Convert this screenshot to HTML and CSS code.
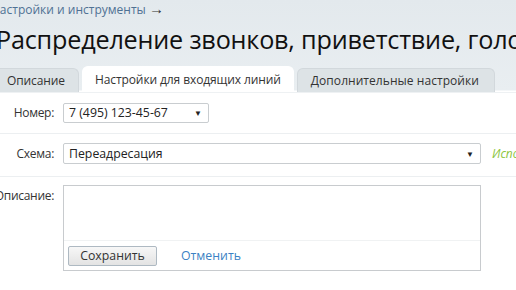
FILE: index.html
```html
<!DOCTYPE html>
<html lang="ru">
<head>
<meta charset="utf-8">
<link rel="stylesheet" href="styles.css">
</head>
<body>
<div class="page">
  <div class="crumbs"><a class="crumb-link">Настройки и инструменты</a> <span class="arrow">→</span></div>
  <h1 class="title">Распределение звонков, приветствие, голосовое меню</h1>
  <div class="tabs">
    <div class="tab">Описание</div>
    <div class="tab active">Настройки для входящих линий</div>
    <div class="tab extra">Дополнительные настройки</div>
  </div>
  <div class="panel">
    <div class="row">
      <div class="label">Номер:</div>
      <div class="field">
        <div class="select short"><span>7 (495) 123-45-67</span><span class="caret">▼</span></div>
      </div>
    </div>
    <div class="row">
      <div class="label">Схема:</div>
      <div class="field">
        <div class="select wide"><span>Переадресация</span><span class="caret">▼</span></div>
        <span class="hint">Использовать</span>
      </div>
    </div>
    <div class="row last">
      <div class="label">Описание:</div>
      <div class="field">
        <div class="editor">
          <div class="editor-area"></div>
          <div class="editor-foot">
            <button class="btn">Сохранить</button>
            <a class="cancel">Отменить</a>
          </div>
        </div>
      </div>
    </div>
  </div>
</div>
</body>
</html>
```

FILE: styles.css
```css
html, body {
  margin: 0;
  padding: 0;
  overflow: hidden;
}
body {
  width: 516px;
  height: 290px;
  background: linear-gradient(180deg, #e3e9ed 0%, #e9eef1 90px, #ffffff 91px);
  font-family: "Open Sans", "Noto Sans", sans-serif;
  color: #333;
}
.page {
  margin-left: -14px;
  width: 620px;
}
.crumbs {
  padding: 1px 0 0 5px;
  font-size: 12px;
  line-height: 17px;
  color: #4f7194;
}
.arrow {
  color: #333;
  font-size: 15px;
  line-height: 12px;
}
.title {
  margin: 0;
  padding: 4px 0 0 10px;
  font-weight: normal;
  font-size: 25.2px;
  line-height: 34px;
  letter-spacing: -0.2px;
  color: #111;
  white-space: nowrap;
}
.tabs {
  display: flex;
  align-items: flex-end;
  gap: 3px;
  margin-top: 11px;
  padding-left: 7px;
  height: 25px;
}
.tab {
  height: 23px;
  line-height: 23px;
  padding: 0 13px;
  font-size: 12px;
  letter-spacing: -0.1px;
  color: #333;
  background: #dde3e6;
  border: 1px solid #d2d8dc;
  border-bottom: none;
  border-radius: 6px 6px 0 0;
  white-space: nowrap;
}
.tab.extra {
  letter-spacing: 0.05px;
  padding: 0 15px 0 13px;
}
.tab.active {
  height: 25px;
  line-height: 25px;
  padding: 0 12px;
  background: #fff;
  border-color: #fff;
}
.panel {
  background: #fff;
  border-top: 1px solid #eef1f3;
}
.row {
  display: grid;
  grid-template-columns: 68px 1fr;
  column-gap: 9px;
  padding: 9px 0 10px;
  border-bottom: 1px solid #eceff1;
  font-size: 12.3px;
}
.row:nth-child(2) {
  padding-top: 9px;
  padding-bottom: 12px;
}
.row.last {
  border-bottom: none;
  padding-top: 8px;
}
.label {
  text-align: right;
  line-height: 21px;
  font-size: 12px;
  letter-spacing: -0.3px;
  color: #333;
}
.field {
  display: flex;
  align-items: center;
  gap: 11px;
}
.select {
  box-sizing: border-box;
  display: flex;
  justify-content: space-between;
  align-items: center;
  height: 21px;
  padding: 0 6px 0 5px;
  border: 1px solid #c9cdd0;
  border-radius: 2px;
  background: #fff;
  color: #222;
}
.select.short {
  width: 146px;
  height: 20px;
}
.select.wide {
  width: 418px;
}
.caret {
  font-size: 8px;
  color: #222;
}
.hint {
  color: #8dc63f;
  font-style: italic;
  font-size: 12px;
}
.editor {
  box-sizing: border-box;
  width: 418px;
  height: 86px;
  border: 1px solid #c8cbce;
  display: flex;
  flex-direction: column;
}
.editor-area {
  flex: 1;
}
.editor-foot {
  height: 29px;
  border-top: 1px solid #f0f2f3;
  display: flex;
  align-items: center;
  gap: 24px;
  padding-left: 4px;
}
.btn {
  box-sizing: border-box;
  width: 89px;
  height: 20px;
  padding: 0;
  font-family: "Open Sans", "Noto Sans", sans-serif;
  font-size: 12.3px;
  color: #333;
  background: linear-gradient(#f7f7f7, #e3e3e3);
  border: 1px solid #aeb9c2;
  border-radius: 2px;
}
.cancel {
  color: #3b82c4;
  font-size: 12.3px;
}
```
